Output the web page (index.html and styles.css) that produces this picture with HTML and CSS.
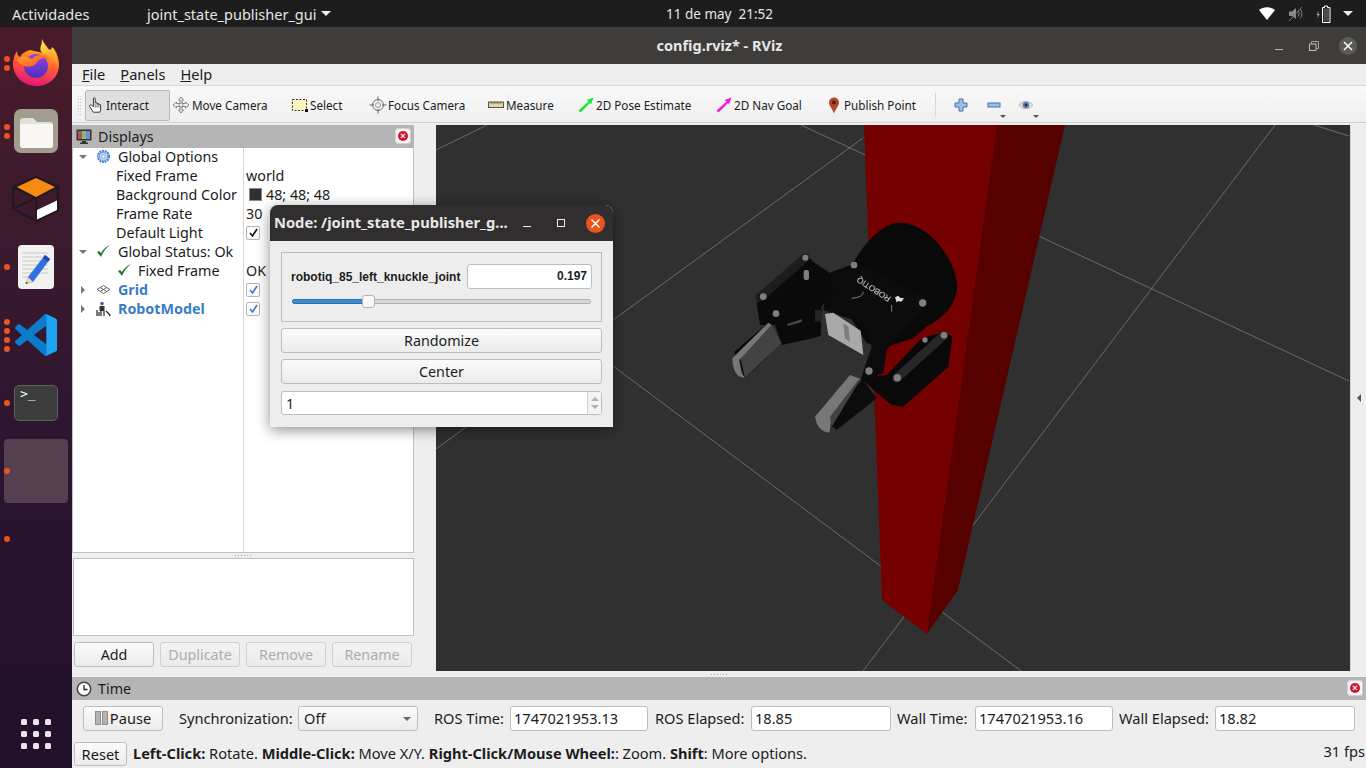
FILE: index.html
```html
<!DOCTYPE html>
<html lang="es">
<head>
<meta charset="utf-8">
<title>config.rviz* - RViz</title>
<link rel="stylesheet" href="styles.css">
</head>
<body>
<header class="topbar">
  <span class="activities">Actividades</span>
  <span class="appmenu">joint_state_publisher_gui<i class="caret"></i></span>
  <span class="clock">11 de may&nbsp; 21:52</span>
  <div class="tray">
    <svg class="tray-wifi" width="16" height="13" viewBox="0 0 16 13"><path d="M0 3C4.500-.8 11.500-.8 16 3L8 13Z" fill="#fff"/></svg>
    <svg class="tray-vol" width="16" height="16" viewBox="0 0 16 16"><path d="M1 5.500h3L8 2v11L4 10H1Z" fill="#8a8a8a"/><path d="M10 4.500c1.500 1.500 1.500 4.500 0 6M12 3c2.500 2.500 2.500 7 0 9.500" stroke="#8a8a8a" fill="none"/><path d="M1 15L14 1" stroke="#777"/></svg>
    <svg class="tray-bat" width="16" height="18" viewBox="0 0 16 18"><path d="M2.500 6L0.500 10h1.500L1 13.500 4 9H2.500Z" fill="#999"/><path d="M8.500 1h3v1.500h2.500v15H6.500v-15h2Z" fill="none" stroke="#fff" stroke-width="1"/><rect x="7.500" y="3.500" width="5.500" height="13" fill="#ddd" opacity=".25"/></svg>
    <i class="caret tray-caret"></i>
  </div>
</header>

<div class="desktop">
  <nav class="dock">
    <div class="dock-item"><i class="dots"><b></b><b></b></i>
      <svg width="48" height="48" viewBox="0 0 48 48">
        <defs>
          <linearGradient id="ffa" x1=".7" y1="0" x2=".4" y2="1"><stop offset="0" stop-color="#ffb01f"/><stop offset=".45" stop-color="#ff5a35"/><stop offset="1" stop-color="#e3147e"/></linearGradient>
          <linearGradient id="ffb" x1=".5" y1="0" x2=".6" y2="1"><stop offset="0" stop-color="#ffe14a"/><stop offset="1" stop-color="#ff8a1e"/></linearGradient>
          <linearGradient id="ffc" x1=".5" y1="0" x2=".5" y2="1"><stop offset="0" stop-color="#8f45e0"/><stop offset="1" stop-color="#4f2ebd"/></linearGradient>
          <linearGradient id="ffd" x1="0" y1="0" x2="1" y2=".6"><stop offset="0" stop-color="#ffa92b"/><stop offset="1" stop-color="#ff5322"/></linearGradient>
        </defs>
        <path d="M44 14C46 18 47 22 47 26 47 38 37 47 25 47 12 47 1 38 1 25 1 20 3 15 5 12 5 15 6 17 8 18 10 14 14 12 18 11L31 14Z" fill="url(#ffa)"/>
        <path d="M30 0C29 6 31 9 35 12 39 15 43 18 45 27 47 18 44 11 40 8 39 12 37 11 35 8 33 5 31 3 30 0Z" fill="url(#ffb)"/>
        <path d="M30 4C32 10 40 14 43 24 40 18 36 16 32 15 27 13 28 8 30 4Z" fill="url(#ffb)"/>
        <circle cx="24" cy="27" r="12" fill="url(#ffc)"/>
        <path d="M5 21C10 16 15 17 20 20 24 15 33 14 37 21 33 18 28 19 26 22 23 25 24 26 20 27 15 29 9 27 5 21Z" fill="url(#ffd)"/>
      </svg>
    </div>
    <div class="dock-item"><i class="dots"><b></b><b></b></i>
      <svg width="46" height="46" viewBox="0 0 46 46">
        <rect x="1" y="1" width="44" height="44" rx="7" fill="#a39d8d"/>
        <path d="M7 13c0-2 1-3 3-3h10l4 4h13c2 0 3 1 3 3v20c0 2-1 3-3 3H10c-2 0-3-1-3-3Z" fill="#e2e0da"/>
        <path d="M7 16h32c1 0 1 1 1 2v19c0 2-1 3-3 3H10c-2 0-3-1-3-3Z" fill="#f8f7f4"/>
      </svg>
    </div>
    <div class="dock-item">
      <svg width="48" height="48" viewBox="0 0 48 48">
        <path d="M24 2L46 12V35L25 46 1 34V12ZM1 12L24 23 46 12M1 34L24 23 25 46" fill="none" stroke="#201a1d" stroke-width="2.200"/>
        <path d="M5 12L24 3 43 12 24 22Z" fill="#f98a10"/>
        <path d="M25 35L45 25.500V35L25 44.500Z" fill="#fff"/>
      </svg>
    </div>
    <div class="dock-item"><i class="dots"><b></b></i>
      <svg width="38" height="46" viewBox="0 0 38 46">
        <rect x="1" y="1" width="36" height="44" rx="4" fill="#f2f1ef"/>
        <path d="M5 9h26M5 13h26M5 17h26M5 21h26M5 25h26M5 29h26M5 33h12" stroke="#c8c8c8"/>
        <path d="M11 33L28 11 33 15 16 38 9 40Z" fill="#2f6fe0"/>
        <path d="M28 11L33 15 31 18 26 14Z" fill="#1c47b5"/>
        <path d="M11 33L16 38 9 40Z" fill="#f7d3a8"/>
        <path d="M9.500 37.500L11 39 8 40Z" fill="#444"/>
      </svg>
    </div>
    <div class="dock-item"><i class="dots"><b></b><b></b><b></b><b></b></i>
      <svg width="42" height="42" viewBox="0 0 100 100">
        <path d="M96.500 10.800L75.900.9a6.200 6.200 0 0 0-7.100 1.200L29.400 38 12.200 25a4.200 4.200 0 0 0-5.300.2L1.400 30.300a4.200 4.200 0 0 0 0 6.200L16.300 50 1.400 63.500a4.200 4.200 0 0 0 0 6.200l5.500 5a4.200 4.200 0 0 0 5.300.2L29.400 62l39.400 35.900a6.200 6.200 0 0 0 7.100 1.200l20.600-9.900A6.200 6.200 0 0 0 100 83.600V16.400a6.200 6.200 0 0 0-3.500-5.600ZM75 72.700L45.100 50 75 27.300Z" fill="#0a7cc9"/>
        <path d="M75.900 99.100a6.200 6.200 0 0 1-7.100-1.200c2.300 2.300 6.200.7 6.200-2.600V4.700c0-3.300-3.900-4.900-6.200-2.600a6.200 6.200 0 0 1 7.100-1.200l20.600 9.900A6.200 6.200 0 0 1 100 16.400v67.200a6.200 6.200 0 0 1-3.500 5.600Z" fill="#1fa4f4"/>
      </svg>
    </div>
    <div class="dock-item"><i class="dots"><b></b></i>
      <div class="term-icon">&gt;_</div>
    </div>
    <div class="dock-item dock-active"><i class="dots"><b></b></i></div>
    <div class="dock-item"><i class="dots"><b></b></i></div>
    <div class="apps-grid"><b></b><b></b><b></b><b></b><b></b><b></b><b></b><b></b><b></b></div>
  </nav>

  <main class="rviz">
    <div class="titlebar">
      <span class="win-title">config.rviz* - RViz</span>
      <div class="win-btns">
        <i class="wb-min"></i>
        <svg class="wb-max" width="10" height="10" viewBox="0 0 10 10"><path d="M2.500 2.500V.5h7v7h-2" fill="none" stroke="#a5a5a3"/><rect x=".5" y="3" width="6.500" height="6.500" fill="none" stroke="#bdbdbb"/></svg>
        <span class="wb-close"><svg width="18" height="18" viewBox="0 0 18 18"><path d="M5 5l8 8M13 5l-8 8" stroke="#fff" stroke-width="1.500"/></svg></span>
      </div>
    </div>

    <div class="menubar">
      <span><u>F</u>ile</span><span><u>P</u>anels</span><span><u>H</u>elp</span>
    </div>

    <div class="toolbar">
      <i class="grip"></i>
      <div class="tool t-interact active">
        <svg width="18" height="18" viewBox="0 0 20 20"><path d="M6 3c0-1.500 2-1.500 2 0v5c0-1 2-1 2 0v1c0-1 2-1 2 0v1c0-1 2-1 2 0v6l-1 2H6l-4-6c-1-1.500 1-3 2-2l2 2Z" fill="#fff" stroke="#222"/><path d="M8 9v4M10 9v4M12 10v3" stroke="#222" stroke-width=".7"/></svg>
        <span>Interact</span>
      </div>
      <div class="tool t-move">
        <svg width="18" height="18" viewBox="0 0 18 18"><path d="M9 1l2.500 3H10v3.500h3.500V6L17 9l-3.500 3v-1.500H10V14h1.500L9 17l-2.500-3H8v-3.500H4.500V12L1 9l3.500-3v1.500H8V4H6.500Z" fill="#eee" stroke="#777" stroke-width=".9"/><circle cx="9" cy="9" r="2" fill="none" stroke="#888" stroke-width=".8"/></svg>
        <span>Move Camera</span>
      </div>
      <div class="tool t-select">
        <svg width="16" height="16" viewBox="0 0 16 16"><rect x=".5" y="2.500" width="14" height="11" fill="#fdf6bd" stroke="#333" stroke-dasharray="2 1.500"/><rect x="13" y="12" width="3" height="3" fill="#111"/></svg>
        <span>Select</span>
      </div>
      <div class="tool t-focus">
        <svg width="18" height="18" viewBox="0 0 18 18"><circle cx="9" cy="9" r="5.500" fill="#eee" stroke="#777"/><circle cx="9" cy="9" r="2.500" fill="none" stroke="#999"/><path d="M9 .5V5M9 13v4.500M.5 9H5M13 9h4.500" stroke="#666"/></svg>
        <span>Focus Camera</span>
      </div>
      <div class="tool t-measure">
        <svg width="16" height="16" viewBox="0 0 16 16"><rect x=".5" y="5" width="15" height="5.500" fill="#e2d89a" stroke="#555"/><path d="M3 5v2M5 5v2M7 5v2M9 5v2M11 5v2M13 5v2" stroke="#555" stroke-width=".7"/></svg>
        <span>Measure</span>
      </div>
      <div class="tool t-pose">
        <svg width="16" height="16" viewBox="0 0 16 16"><path d="M.5 13.500L10.500 4.500 8.500 3 15.500.5 13 7.500 12 6 2.500 15.500Z" fill="#22e436"/></svg>
        <span>2D Pose Estimate</span>
      </div>
      <div class="tool t-nav">
        <svg width="16" height="16" viewBox="0 0 16 16"><path d="M.5 13.500L10.500 4.500 8.500 3 15.500.5 13 7.500 12 6 2.500 15.500Z" fill="#f01ddc"/></svg>
        <span>2D Nav Goal</span>
      </div>
      <div class="tool t-pub">
        <svg width="12" height="17" viewBox="0 0 12 17"><path d="M6 16.500C4 11 1 9 1 5.500a5 5 0 0 1 10 0C11 9 8 11 6 16.500Z" fill="#b0482c"/><circle cx="6" cy="5.500" r="2" fill="#5a1e10"/></svg>
        <span>Publish Point</span>
      </div>
      <i class="tb-sep"></i>
      <svg class="tb-plus" width="14" height="14" viewBox="0 0 14 14"><path d="M5 1h4v4h4v4H9v4H5V9H1V5h4Z" fill="#9dbfe6" stroke="#3d73b5"/></svg>
      <div class="tb-minus"><svg width="14" height="14" viewBox="0 0 14 14"><rect x="1" y="5" width="12" height="4" fill="#9dbfe6" stroke="#3d73b5"/></svg><i class="mini-caret"></i></div>
      <div class="tb-eye"><svg width="16" height="14" viewBox="0 0 16 14"><path d="M1 7c3-5 11-5 14 0-3 5-11 5-14 0Z" fill="#d8dde4" stroke="#a9afb8" stroke-width=".7"/><circle cx="8" cy="7" r="3.200" fill="#5f7aa8"/><circle cx="8" cy="7" r="1.300" fill="#1e2a44"/></svg><i class="mini-caret"></i></div>
    </div>

    <div class="workspace">
      <section class="left">
        <div class="panel-head">
          <svg width="16" height="15" viewBox="0 0 16 15"><rect x=".5" y=".5" width="15" height="11" fill="#333"/><rect x="2" y="2" width="4" height="8" fill="#b5534f"/><rect x="6" y="2" width="4" height="8" fill="#7bbf7a"/><rect x="10" y="2" width="4" height="8" fill="#7f86cc"/><path d="M6 12h4v1.500h2V15H4v-1.500h2Z" fill="#333"/></svg>
          <span>Displays</span>
          <span class="close-mini"><i>×</i></span>
        </div>
        <div class="tree">
          <div class="row top"><i class="arrow-d"></i>
            <svg class="ticon" width="15" height="15" viewBox="0 0 15 15"><circle cx="7.500" cy="7.500" r="5.600" fill="none" stroke="#4b86d6" stroke-width="2" stroke-dasharray="2 .7"/><circle cx="7.500" cy="7.500" r="4.300" fill="#bcd3f0" stroke="#4b86d6" stroke-width=".8"/><circle cx="7.500" cy="7.500" r="1.800" fill="#fff" stroke="#4b86d6" stroke-width=".6"/></svg>
            <span class="n">Global Options</span></div>
          <div class="row child"><span class="n">Fixed Frame</span><span class="v">world</span></div>
          <div class="row child"><span class="n">Background Color</span><span class="v"><i class="swatch"></i>48; 48; 48</span></div>
          <div class="row child"><span class="n">Frame Rate</span><span class="v">30</span></div>
          <div class="row child"><span class="n">Default Light</span><span class="v"><i class="cb"><svg width="11" height="11" viewBox="0 0 11 11"><path d="M2 6l2.500 3L9 2" fill="none" stroke="#111" stroke-width="1.600"/></svg></i></span></div>
          <div class="row top"><i class="arrow-d"></i>
            <svg class="ticon" width="15" height="15" viewBox="0 0 15 15"><path d="M1 8l4 5c2-5 5-9 9-12C9 3 6 7 5 9L3 7Z" fill="#1f7a30"/></svg>
            <span class="n">Global Status: Ok</span></div>
          <div class="row sub">
            <svg class="ticon" width="15" height="15" viewBox="0 0 15 15"><path d="M1 8l4 5c2-5 5-9 9-12C9 3 6 7 5 9L3 7Z" fill="#1f7a30"/></svg>
            <span class="n">Fixed Frame</span><span class="v">OK</span></div>
          <div class="row top blue"><i class="arrow-r"></i>
            <svg class="ticon" width="15" height="15" viewBox="0 0 15 15"><path d="M1 7.500L7.500 3.500 14 7.500 7.500 11.500Z M4.200 5.500L10.800 9.500M10.800 5.500L4.200 9.500" fill="none" stroke="#555" stroke-width=".9"/></svg>
            <span class="n">Grid</span><span class="v"><i class="cb"><svg width="11" height="11" viewBox="0 0 11 11"><path d="M2 6l2.500 3L9 2" fill="none" stroke="#3d7cc9" stroke-width="1.600"/></svg></i></span></div>
          <div class="row top blue"><i class="arrow-r"></i>
            <svg class="ticon" width="16" height="16" viewBox="0 0 16 16"><circle cx="6" cy="2.500" r="1.800" fill="#3a62b0"/><rect x="3.500" y="5" width="5" height="5" fill="#333"/><path d="M1 15V9M3 15v-4M5 15v-5M8 15v-5M10 10l4 4-1 1" stroke="#222" stroke-width="1.200" fill="none"/></svg>
            <span class="n">RobotModel</span><span class="v"><i class="cb"><svg width="11" height="11" viewBox="0 0 11 11"><path d="M2 6l2.500 3L9 2" fill="none" stroke="#3d7cc9" stroke-width="1.600"/></svg></i></span></div>
        </div>
        <div class="hsplit"><i></i></div>
        <div class="desc"></div>
        <div class="panel-btns">
          <button class="btn">Add</button>
          <button class="btn off">Duplicate</button>
          <button class="btn off">Remove</button>
          <button class="btn off">Rename</button>
        </div>
      </section>

      <div class="view">
        <svg class="scene" width="914" height="546" viewBox="436 125 914 546">
          <rect x="436" y="125" width="914" height="546" fill="#303030"/>
          <g stroke="#6c6c6c" stroke-width="1" fill="none">
            <path d="M487 125L436 150"/>
            <path d="M801 125L1349 381"/>
            <path d="M863 138L436 449"/>
            <path d="M613 366L1021 671"/>
            <path d="M1275 125L863 671"/>
            <path d="M1314 125L1349 136"/>
          </g>
          <path d="M864 125H1000L927 634 882 600Z" fill="#750000"/>
          <path d="M997 125H1065L958 590 927 634Z" fill="#560000"/>
          <g transform="translate(700 210) scale(.33333)">
            <path d="M465 150C505 80 560 38 600 38 680 40 760 130 772 225 770 290 720 330 680 350L640 385 560 410 500 400 400 240Z" fill="#090909"/>
            <path d="M385 190L470 158 690 270 610 360 560 420 550 490 480 515 515 410 490 340 370 300Z" fill="#0c0c0c"/>
            <path d="M170 280L318 135 345 160 385 185 400 245 365 290 362 378 325 388 245 405 225 345 180 345Z" fill="#0a0a0a"/>
            <path d="M103 425L205 338 245 400 135 505Z" fill="#0a0a0a"/>
            <path d="M180 262L316 143" stroke="#1d1d1d" stroke-width="26" stroke-linecap="round"/>
            <path d="M262 342L305 328 305 336 262 348Z" fill="#4a4a4a"/>
            <path d="M345 300h18v35h-18Z" fill="#232323"/>
            <path d="M120 440L212 340 245 400 135 503Z" fill="#434343"/>
            <path d="M97 445L205 338 214 345 118 450 125 490 135 505 115 498Q97 480 97 445Z" fill="#777"/>
            <path d="M375 312L400 308 482 362 490 435 385 375Z" fill="#a9a9a9"/>
            <path d="M430 340L445 350 450 395 435 385Z" fill="#7d7d7d"/>
            <path d="M560 495L665 385 735 365 757 380 745 470 610 590 575 585 520 540 485 505Z" fill="#090909"/>
            <path d="M385 640L450 540 490 510 530 565 410 660Z" fill="#0c0c0c"/>
            <path d="M590 505L732 376" stroke="#272727" stroke-width="26" stroke-linecap="round"/>
            <path d="M345 620L450 495 482 507 395 625 388 668Q360 665 350 640Z" fill="#777"/>
            <path d="M390 620L475 510 482 507 395 650Z" fill="#434343"/>
            <g fill="#7f7f7f">
              <circle cx="190" cy="260" r="10"/><circle cx="316" cy="143" r="9"/><circle cx="228" cy="311" r="10"/>
              <rect x="311" y="180" width="16" height="30" rx="6"/><circle cx="462" cy="165" r="10"/><circle cx="668" cy="279" r="11"/>
              <circle cx="592" cy="503" r="11"/><circle cx="732" cy="376" r="10"/><circle cx="507" cy="483" r="11"/><circle cx="675" cy="390" r="8"/>
            </g>
            <text class="logo" transform="translate(574 262) rotate(213)">ROBOTIQ</text>
            <path d="M585 262l10-5 5 6 12 2-8 10-8-2-6 4Z" fill="#ddd"/>
            <path d="M455 265Q490 262 490 245M575 285V305" stroke="#bbb" stroke-width="2" fill="none"/>
          </g>
        </svg>
      </div>
      <div class="side-strip"><i></i></div>
    </div>

    <div class="vsplit"><i></i></div>

    <section class="time">
      <div class="panel-head wide">
        <svg width="16" height="16" viewBox="0 0 16 16"><circle cx="8" cy="8" r="6.700" fill="#fff" stroke="#444" stroke-width="1.500"/><path d="M8 4v4.500h3.500" fill="none" stroke="#222" stroke-width="1.300"/></svg>
        <span>Time</span>
        <span class="close-mini"><i>×</i></span>
      </div>
      <div class="time-row">
        <button class="btn pause"><span class="pause-ico"><i></i><i></i></span>Pause</button>
        <label class="l-sync">Synchronization:</label>
        <div class="combo">Off<i class="combo-caret"></i></div>
        <label class="l-ros">ROS Time:</label>
        <div class="field f-ros">1747021953.13</div>
        <label class="l-el">ROS Elapsed:</label>
        <div class="field f-el">18.85</div>
        <label class="l-wt">Wall Time:</label>
        <div class="field f-wt">1747021953.16</div>
        <label class="l-we">Wall Elapsed:</label>
        <div class="field f-we">18.82</div>
      </div>
    </section>

    <footer class="status">
      <button class="btn reset">Reset</button>
      <span class="hint"><b>Left-Click:</b> Rotate. <b>Middle-Click:</b> Move X/Y. <b>Right-Click/Mouse Wheel:</b>: Zoom. <b>Shift</b>: More options.</span>
      <span class="fps">31 fps</span>
    </footer>
  </main>
</div>

<div class="dialog">
  <div class="dlg-title">
    <span class="dlg-name">Node: /joint_state_publisher_g...</span>
    <i class="dlg-min"></i>
    <i class="dlg-max"></i>
    <span class="dlg-close"><svg width="19" height="19" viewBox="0 0 19 19"><path d="M5.500 5.500l8 8M13.500 5.500l-8 8" stroke="#fff" stroke-width="1.500"/></svg></span>
  </div>
  <div class="dlg-body">
    <div class="group">
      <div class="group-row">
        <span class="joint">robotiq_85_left_knuckle_joint</span>
        <div class="joint-val">0.197</div>
      </div>
      <div class="slider"><i class="fill"></i><i class="handle"></i></div>
    </div>
    <button class="btn dlg-btn">Randomize</button>
    <button class="btn dlg-btn">Center</button>
    <div class="spin"><span>1</span><div class="spin-arrows"><i class="up"></i><i class="down"></i></div></div>
  </div>
</div>
</body>
</html>
```
FILE: styles.css
```css
* { box-sizing: border-box; }
html, body { margin: 0; padding: 0; }
body {
  width: 1366px; height: 768px; overflow: hidden; position: relative;
  font-family: "Noto Sans", "Open Sans", sans-serif; font-size: 14.300px; color: #1c1c1c;
  background: #2c1626;
}
i { display: block; font-style: normal; }
svg { display: block; flex: none; }

/* top bar */
.topbar {
  height: 27px; background: #1d1d1d; color: #e6e6e6; display: flex; align-items: center;
  position: relative; font-size: 14.500px;
}
.activities { margin-left: 12px; width: 135px; }
.appmenu { display: flex; align-items: center; }
.caret { width: 0; height: 0; border: 5px solid transparent; border-top: 5px solid #eee; border-bottom: 0; margin-left: 5px; }
.clock { position: absolute; left: 666px; font-size: 13.500px; }
.tray { margin-left: auto; display: flex; align-items: center; margin-right: 13px; }
.tray-wifi { margin-right: 13px; }
.tray-vol { margin-right: 12px; }
.tray-bat { margin-right: 11px; }
.tray-caret { margin-left: 0; }

.desktop { display: flex; height: 741px; }

/* dock */
.dock {
  width: 72px; padding-top: 2px; position: relative; display: flex; flex-direction: column;
  background: linear-gradient(180deg, #4a1b2a 0%, #3a1a2e 30%, #2a1530 60%, #201029 100%);
}
.dock-item { height: 68px; display: flex; align-items: center; justify-content: center; position: relative; flex: none; }
.dots { position: absolute; left: 4px; top: 0; bottom: 0; display: flex; flex-direction: column; justify-content: center; gap: 3px; z-index: 2; }
.dots b { display: block; width: 6px; height: 6px; border-radius: 50%; background: #e95420; }
.dock-active { background: #54404f; width: 64px; height: 64px; margin: 2px 4px; border-radius: 4px; }
.dock-active .dots { left: 0; }
.term-icon {
  width: 44px; height: 36px; background: #3c3c3c; border: 1px solid #5e5e5e; border-radius: 5px;
  color: #f4f4f4; font: 13px/14px "DejaVu Sans Mono", monospace; padding: 1px 0 0 5px;
}
.apps-grid { position: absolute; left: 21px; bottom: 19px; display: grid; grid-template-columns: repeat(3, 6px); gap: 6px; }
.apps-grid b { width: 6px; height: 6px; background: #e8e4e8; border-radius: 1.500px; }

/* rviz window */
.rviz { flex: 1; min-width: 0; display: flex; flex-direction: column; background: #eeeeee; }
.titlebar { height: 37px; flex: none; background: #3e3d3b; position: relative; display: flex; align-items: center; justify-content: center; color: #e6e6e6; padding-bottom: 2px; }
.win-title { font-weight: 700; font-size: 14.500px; margin-left: 1px; }
.win-btns { position: absolute; right: 0; top: 0; height: 37px; display: flex; align-items: center; }
.wb-min { width: 8px; height: 1px; background: #bbb; margin-top: 8px; margin-right: 26px; }
.wb-max { margin-right: 20px; }
.wb-close { width: 18px; height: 18px; border-radius: 50%; background: #5b5a58; margin-right: 9px; }

.menubar { height: 22px; flex: none; border-bottom: 1px solid #d9d9d9; display: flex; align-items: center; padding-left: 10px; padding-bottom: 2px; gap: 15px; font-size: 14.600px; }
.toolbar { height: 37px; flex: none; padding-top: 2px; background: linear-gradient(180deg, #f9f9f9, #efefef); display: flex; align-items: center; font-size: 11.700px; position: relative; border-bottom: 1px solid #d2d2d2; }
.grip { width: 4px; height: 20px; margin: 0 4px 0 5px; background-image: radial-gradient(#b4b4b4 0.600px, transparent 0.700px); background-size: 2.500px 3px; }
.tool { display: flex; align-items: center; height: 31px; flex: none; gap: 2px; }
.tool.active { background: #dfdfdf; border: 1px solid #b9b9b9; border-radius: 2px; }
.t-interact { width: 85px; padding-left: 2px; gap: 0; }
.t-move { width: 118px; margin-left: 2px; }
.t-select { width: 77px; padding-left: 2px; }
.t-focus { width: 119px; gap: 1px; padding-left: 2px; }
.t-measure { width: 90px; padding-left: 2px; }
.t-pose { width: 138px; padding-left: 2px; }
.t-nav { width: 112px; padding-left: 2px; }
.t-pub { width: 109px; padding-left: 2px; gap: 4px; }
.tb-sep { width: 1px; height: 24px; background: #d6d6d6; margin-right: 18px; }
.tb-plus { margin-right: 19px; }
.tb-minus, .tb-eye { position: relative; }
.tb-minus { margin-right: 17px; }
.mini-caret { position: absolute; right: -5px; bottom: -6px; width: 0; height: 0; border: 3px solid transparent; border-top: 3px solid #555; border-bottom: 0; }

.workspace { height: 548px; flex: none; display: flex; padding-top: 2px; background: #eeeeee; }
.left { width: 342px; flex: none; display: flex; flex-direction: column; }
.panel-head { height: 23px; flex: none; background: #b5b5b5; display: flex; align-items: center; padding-left: 4px; gap: 6px; font-size: 14.300px; position: relative; }
.close-mini { position: absolute; right: 3px; top: 3px; width: 16px; height: 16px; background: #f4f4f4; border: 1px solid #d0d0d0; border-radius: 3px; display: flex; align-items: center; justify-content: center; }
.close-mini i { width: 10px; height: 10px; border-radius: 50%; background: #d3162f; color: #fff; font: 700 9px/10px "Liberation Sans", sans-serif; text-align: center; }
.panel-head.wide { padding-left: 4px; }

.tree {
  height: 405px; flex: none; border: 1px solid #c0c0c0; border-top: 0; padding: 0;
  background: #fff linear-gradient(#d6d6d6, #d6d6d6) no-repeat 170px 0 / 1px 100%;
}
.row { height: 19px; display: flex; align-items: center; position: relative; white-space: nowrap; padding-bottom: 2px; }
.row .v { position: absolute; left: 173px; display: flex; align-items: center; }
.top .n { position: absolute; left: 45px; }
.child .n { position: absolute; left: 43px; }
.sub .n { position: absolute; left: 65px; }
.ticon { position: absolute; left: 23px; }
.sub .ticon { left: 44px; }
.arrow-d { position: absolute; left: 6px; width: 0; height: 0; border: 4px solid transparent; border-top: 4px solid #777; border-bottom: 0; }
.arrow-r { position: absolute; left: 8px; width: 0; height: 0; border: 4px solid transparent; border-left: 4px solid #777; border-right: 0; }
.blue .n { color: #3a7dc6; font-weight: 700; }
.swatch { width: 13px; height: 13px; background: #303030; border: 1px solid #8a8a8a; margin: 0 4px 0 3px; }
.cb { width: 14px; height: 14px; border: 1px solid #b4b4b4; border-radius: 2px; background: #fbfbfb; display: flex; align-items: center; justify-content: center; }

.hsplit { height: 5px; flex: none; display: flex; justify-content: center; align-items: center; }
.hsplit i, .vsplit i { width: 16px; height: 1px; background-image: repeating-linear-gradient(90deg, #a8a8a8 0 1px, transparent 1px 3px); }
.desc { height: 78px; flex: none; background: #fff; border: 1px solid #c0c0c0; margin-left: 1px; }
.panel-btns { display: flex; gap: 6px; padding: 6px 0 0 2px; }

.btn {
  font: inherit; color: #1c1c1c; height: 25px; width: 80px; padding: 0;
  background: linear-gradient(180deg, #fbfbfb, #ebebeb); border: 1px solid #bdbdbd; border-radius: 3px;
}
.btn.off { color: #adadad; background: linear-gradient(180deg, #f3f3f3, #ebebeb); border-color: #d0d0d0; }

.view { width: 914px; height: 546px; margin-left: 22px; flex: none; }
.scene { display: block; }
.logo { font: 400 25px "Liberation Sans", sans-serif; fill: #d8d8d8; }
.side-strip { flex: 1; display: flex; align-items: center; justify-content: center; border-left: 1px solid #d4d4d4; }
.side-strip i { width: 0; height: 0; border: 4px solid transparent; border-right: 4px solid #555; border-left: 0; }

.vsplit { height: 6px; flex: none; display: flex; justify-content: center; align-items: center; }

.time { height: 63px; flex: none; }
.time .panel-head { height: 23px; }
.time-row { height: 40px; display: flex; align-items: center; padding-left: 11px; padding-bottom: 3px; font-size: 14.600px; position: relative; }
.pause { width: 80px; display: flex; align-items: center; justify-content: center; gap: 2px; padding-bottom: 2px; }
.pause-ico { display: flex; gap: 1px; }
.pause-ico i { width: 6px; height: 14px; background: #b4b4b4; border: 1px solid #8e8e8e; }
.time-row label { flex: none; padding-bottom: 1px; }
.l-sync { margin-left: 16px; width: 119px; }
.combo { width: 120px; height: 25px; background: linear-gradient(180deg, #fbfbfb, #ebebeb); border: 1px solid #bdbdbd; border-radius: 3px; padding: 0 5px 2px; display: flex; align-items: center; position: relative; flex: none; }
.combo-caret { position: absolute; right: 6px; top: 10px; width: 0; height: 0; border: 4px solid transparent; border-top: 4px solid #666; border-bottom: 0; }
.l-ros { margin-left: 16px; width: 76px; }
.field { height: 25px; background: #fff; border: 1px solid #bdbdbd; border-radius: 3px; padding: 0 0 2px 3px; display: flex; align-items: center; flex: none; }
.f-ros { width: 138px; }
.l-el { margin-left: 7px; width: 96px; }
.f-el { width: 140px; }
.l-wt { margin-left: 6px; width: 78px; }
.f-wt { width: 138px; }
.l-we { margin-left: 6px; width: 96px; }
.f-we { width: 140px; }

.status { height: 28px; flex: none; display: flex; align-items: center; padding-left: 2px; position: relative; font-size: 14.600px; }
.reset { width: 53px; height: 24px; }
.hint { margin-left: 6px; padding-bottom: 2px; }
.fps { position: absolute; right: 1px; top: 1px; }

/* floating dialog */
.dialog {
  position: absolute; left: 270px; top: 205px; width: 343px; height: 222px;
  background: #ededed; border-radius: 8px 8px 0 0; box-shadow: 0 3px 14px rgba(0,0,0,.45);
  display: flex; flex-direction: column;
}
.dlg-title { height: 36px; flex: none; background: #302e2e; border-radius: 8px 8px 0 0; display: flex; align-items: center; color: #e8e8e8; padding-left: 4px; position: relative; }
.dlg-name { font-weight: 700; font-size: 14.700px; width: 249px; white-space: nowrap; padding-bottom: 2px; }
.dlg-min { width: 8px; height: 1px; background: #eee; margin-top: 6px; }
.dlg-max { width: 8px; height: 8px; border: 1px solid #eee; margin-left: 26px; }
.dlg-close { width: 19px; height: 19px; border-radius: 50%; background: #e95420; margin-left: 21px; }
.dlg-body { padding: 11px 11px 0; display: flex; flex-direction: column; }
.group { height: 70px; border: 1px solid #bcbcbc; padding: 11px 9px 0; flex: none; }
.group-row { display: flex; align-items: center; justify-content: space-between; height: 25px; }
.joint { font: 700 12px "Liberation Sans", sans-serif; }
.joint-val { width: 125px; height: 25px; background: #fff; border: 1px solid #bdbdbd; border-radius: 3px; font: 700 12px/23px "Liberation Sans", sans-serif; text-align: right; padding-right: 4px; }
.slider { height: 5px; margin: 10px 1px 0; width: 299px; background: #d6d6d6; border: 1px solid #b0b0b0; border-radius: 3px; position: relative; }
.slider .fill { position: absolute; left: -1px; top: -1px; height: 5px; width: 72px; background: #3d8ed0; border: 1px solid #2e6fa8; border-radius: 3px 0 0 3px; }
.slider .handle { position: absolute; left: 69px; top: -5px; width: 13px; height: 13px; background: #f8f8f8; border: 1px solid #b4b4b4; border-radius: 3px; }
.dlg-btn { width: 321px; height: 25px; margin-top: 6px; flex: none; }
.spin { height: 24px; width: 321px; margin-top: 7px; flex: none; background: #fff; border: 1px solid #bdbdbd; border-radius: 3px; display: flex; align-items: center; justify-content: space-between; padding-left: 4px; }
.spin-arrows { width: 14px; height: 22px; border-left: 1px solid #cfcfcf; display: flex; flex-direction: column; align-items: center; justify-content: center; gap: 4px; background: #f4f4f4; }
.spin-arrows .up { width: 0; height: 0; border: 4px solid transparent; border-bottom: 4px solid #b0b0b0; border-top: 0; }
.spin-arrows .down { width: 0; height: 0; border: 4px solid transparent; border-top: 4px solid #b0b0b0; border-bottom: 0; }
```
